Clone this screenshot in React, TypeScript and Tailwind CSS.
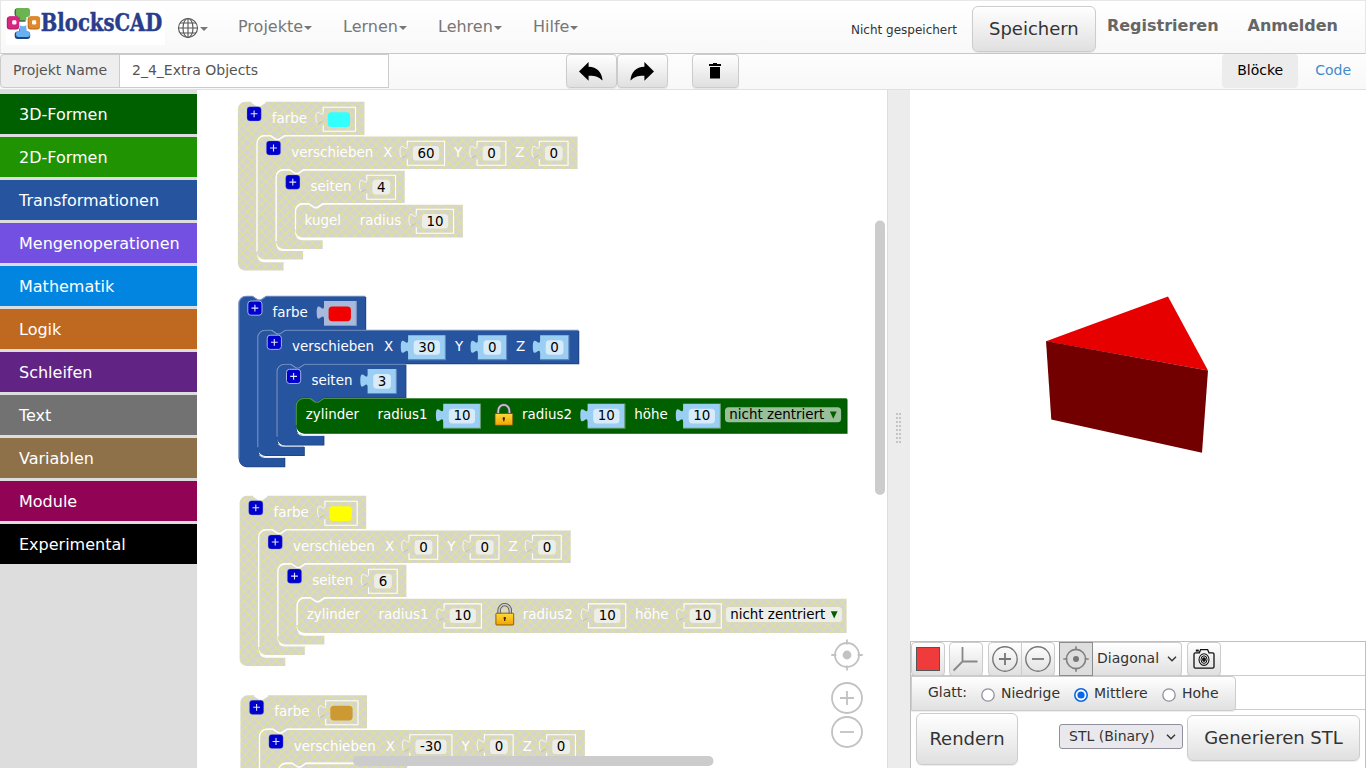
import React from 'react';

const K = 0.9157;
const FS = 13.43;

const ADV: Record<string, number> = {
  farbe: 35.2,
  verschieben: 82,
  seiten: 41,
  X: 9.2,
  Y: 8.2,
  Z: 9.2,
};

const CANVAS_BOTTOM = 768;

/* ---------- block canvas ---------- */

const top = (x: number, y: number) =>
  `M ${x} ${y + 7.3} a 7.3 7.3 0 0 1 7.3 -7.3 h 6.4 l 5.5 3.7 h 2.8 l 5.5 -3.7`;

function Shape({ d, hi, lo, on, color, dark, light, x, y }: {
  d: string; hi: string; lo?: string; on: boolean; color: string; dark: string; light: string; x: number; y: number;
}) {
  return (
    <g transform={`translate(${x} ${y})`}>
      {on && <path d={d} fill={dark} transform="translate(0.9 0.9)" />}
      <path d={d} fill={on ? color : 'url(#off)'} />
      <path d={hi} fill="none" stroke={on ? light : '#fff'} strokeWidth={on ? 1.1 : 1.3} />
      {lo && <path d={lo} fill="none" stroke={on ? '#e3e9f3' : '#fff'} strokeWidth="1.1" />}
    </g>
  );
}

function CBlock({ x, y, w, foot, h1, h2, on, first }: {
  x: number; y: number; w: number; foot: number; h1: number; h2: number; on: boolean; first?: boolean;
}) {
  const c = 19;
  const head = 33.3;
  const d = `${top(0, 0)} H ${w} V ${head} H 46.5 l -5.5 3.7 h -2.8 l -5.5 -3.7 H ${c + 7.3} a 7.3 7.3 0 0 0 -7.3 7.3 V ${h1 - 7.3} a 7.3 7.3 0 0 0 7.3 7.3 H ${foot} V ${h2} H 7.3 a 7.3 7.3 0 0 1 -7.3 -7.3 Z`;
  const hi = first && !on
    ? `M 13.7 .3 l 5.5 3.7 h 2.8 l 5.5 -3.7`
    : `M .2 ${h2 - 8} V 7.5 A 7.3 7.3 0 0 1 7.5 .2 h 6.3 l 5.5 3.7 h 2.8 l 5.5 -3.7 H ${w}`;
  const lo = `M ${c + 1.8} ${h1 - 2.2} a 7.3 7.3 0 0 0 5.5 2.4 H ${foot}`;
  return <Shape d={d} hi={hi} lo={lo} on={on} color="#26549f" dark="#1e437f" light="#7892c2" x={x} y={y} />;
}

function Plus({ x, y, on }: { x: number; y: number; on: boolean }) {
  return (
    <g transform={`translate(${x} ${y})`}>
      <rect width="14.2" height="14.2" rx="3" fill="#0000cc" stroke={on ? '#a6b4e4' : '#8d8ddd'} strokeWidth={on ? 1 : 0.3} />
      <path d="M7.1 3.7 v6.8 M3.7 7.1 h6.8" stroke="#e4e4f4" strokeWidth="1.1" />
    </g>
  );
}

function Label({ x, y, children }: { x: number; y: number; children: string }) {
  return <text x={x} y={y} fill="#fff" fontSize={FS}>{children}</text>;
}

const TAB = `c 0 9.16 -7.3 -7.3 -7.3 6.9 s 7.3 -2.3 7.3 6.9`;

function Socket({ x, y, w, on, fill, edge }: { x: number; y: number; w: number; on: boolean; fill: string; edge: string }) {
  return on ? (
    <g transform={`translate(${x} ${y})`}>
      <path d={`M 0 0 V 4.6 ${TAB} V 24.2 H ${w} V 0 Z`} fill={fill} />
      <path d={`M 0 24.4 H ${w} V 0`} fill="none" stroke={edge} strokeWidth="1.1" />
    </g>
  ) : (
    <g transform={`translate(${x} ${y})`} fill="none" stroke="#fff">
      <path d={`M 0 18.4 V 24.4 H ${w} V .4 H 0 V 4.6`} strokeWidth="1.1" />
      <path d="M 0 4.6 c 0 9.16 -7.3 -7.3 -7.3 6.9 c 0 3 .8 4.6 1.8 5" strokeWidth=".8" />
      <path d="M -5.5 17.2 l 4.8 -2.6" stroke="#b9b9b4" strokeWidth=".8" />
    </g>
  );
}

const numW = (v: string) => (v.startsWith('-') ? 4.85 : 0) + v.replace('-', '').length * 8.54;

function Num({ x, y, v, on, green }: { x: number; y: number; v: string; on: boolean; green?: boolean }) {
  const w = numW(v) + 20.2;
  return (
    <g>
      <Socket x={x} y={y} w={w} on={on} fill="#9aCEf2" edge={green ? '#5f9a6b' : '#6385bd'} />
      <rect x={x + 5.6} y={y + 10 - 5} width={w - 11} height="14.6" rx="3.6" fill={on ? '#d7ebfa' : '#eeeee9'} />
      <text x={x + w / 2 + 0.1} y={y + (green ? 16.2 : 16.7)} textAnchor="middle" fill="#000" fontSize={FS}>{v}</text>
    </g>
  );
}

function Lock({ x, y }: { x: number; y: number }) {
  return (
    <g transform={`translate(${x} ${y})`}>
      <path d="M3.8 10.5 V7.2 a5.6 6 0 0 1 11.2 0 V10.5" fill="none" stroke="#4c4c4c" strokeWidth="3.3" />
      <path d="M3.8 10.5 V7.2 a5.6 6 0 0 1 11.2 0 V10.5" fill="none" stroke="#c9c9c9" strokeWidth="1.7" />
      <rect x=".6" y="9.8" width="17.8" height="11.8" rx=".8" fill="url(#gold)" stroke="#6b4a08" strokeWidth=".8" />
      <path d="M9.4 13.9 v3.6" stroke="#3b2600" strokeWidth="1.3" />
      <circle cx="9.4" cy="14.7" r="1.2" fill="#3b2600" />
    </g>
  );
}

interface StackData {
  x: number; y: number; on?: boolean; color: string; pos: string[]; sides: string; leaf: 'kugel' | 'zylinder';
}

function Stack({ x, y, on = false, color, pos, sides, leaf }: StackData) {
  const x2 = x + 18.9, y2 = y + 33.9;
  const x3 = x + 38.1, y3 = y + 68;
  const x4 = x + 57.4, y4 = y + 102.2;
  const lh = leaf === 'kugel' ? 33.6 : 35;
  const e = leaf === 'kugel' ? 0 : 1.5;
  const o = on ? 0.5 : 0;
  const inView = y3 + 8 < CANVAS_BOTTOM;
  let cx = x2 + 34.5 + ADV.verschieben + 10;
  const fields = pos.map((v, i) => {
    const name = 'XYZ'[i];
    const lx = cx;
    const bx = lx + ADV[name] + 14.8;
    cx = bx + numW(v) + 20.2 + 9.5;
    return { name, lx, bx, v };
  });
  const ty = 21.3;
  const leafW = leaf === 'kugel' ? 167.6 : 846.6 - x4;
  return (
    <g>
      <CBlock first x={x} y={y} w={126.6} foot={45.7} h1={159.6 + e} h2={168.8 + e} on={on} />
      <CBlock x={x2} y={y2} w={cx - x2} foot={46.3} h1={114.6 + e} h2={123.7 + e} on={on} />
      <CBlock x={x3} y={y3} w={128.7} foot={46.7} h1={69.6 + e} h2={79.1 + e} on={on} />
      <Shape x={x4} y={y4} on={on} color="#006000" dark="#004d00" light="#4c904c"
        d={`${top(0, 0)} H ${leafW} V ${lh - o} H 7.3 a 7.3 7.3 0 0 1 -7.3 -7.3 Z`}
        hi={`M .2 ${lh - 8} V 7.5 A 7.3 7.3 0 0 1 7.5 .2 h 6.3 l 5.5 3.7 h 2.8 l 5.5 -3.7 H ${leafW}`} />

      <Plus x={x + 9.1} y={y + 4.9} on={on} />
      <Label x={x + 33.9} y={y + 20.9}>farbe</Label>
      <Socket x={x + 85.3} y={y + 5} w={32.3} on={on} fill="#a8badb" edge="#7f97c6" />
      <rect x={x + 89.9} y={y + 10.4} width="22.3" height="14.7" rx="3.6" fill={color} />

      <Plus x={x2 + 9.6} y={y2 + 5.2} on={on} />
      <Label x={x2 + 34.5} y={y2 + ty}>verschieben</Label>
      {fields.map((f) => (
        <g key={f.name}>
          <Label x={f.lx} y={y2 + ty}>{f.name}</Label>
          <Num x={f.bx} y={y2 + 5.2} v={f.v} on={on} />
        </g>
      ))}

      {inView && (
        <g>
          <Plus x={x3 + 9.7} y={y3 + 5.2} on={on} />
          <Label x={x3 + 34.6} y={y3 + ty}>seiten</Label>
          <Num x={x3 + 90.8} y={y3 + 5} v={sides} on={on} />
        </g>
      )}

      {inView && leaf === 'kugel' && (
        <g>
          <Label x={x4 + 9.3} y={y4 + ty}>kugel</Label>
          <Label x={x4 + 64.4} y={y4 + ty}>radius</Label>
          <Num x={x4 + 121} y={y4 + 4.9} v="10" on={on} />
        </g>
      )}
      {inView && leaf === 'zylinder' && (
        <g>
          <Label x={x4 + 9.7} y={y4 + ty - 0.3}>zylinder</Label>
          <Label x={x4 + 81.4} y={y4 + ty - 0.3}>radius1</Label>
          <Num x={x4 + 147.1} y={y4 + 5.5} v="10" on={on} green />
          <Lock x={x4 + 198.3} y={y4 + 5.4} />
          <Label x={x4 + 225.8} y={y4 + ty - 0.3}>radius2</Label>
          <Num x={x4 + 291.5} y={y4 + 5.5} v="10" on={on} green />
          <Label x={x4 + 338.1} y={y4 + ty - 0.3}>höhe</Label>
          <Num x={x4 + 387} y={y4 + 5.5} v="10" on={on} green />
          <rect x={x4 + 428.9} y={y4 + 9} width="116.1" height="15" rx="3.6" fill={on ? '#99bf99' : '#eeeee9'} />
          <text x={x4 + 433.2} y={y4 + ty - 0.3} fill="#000" fontSize={FS}>nicht zentriert</text>
          <path d={`M ${x4 + 533.8} ${y4 + 13.2} h 6.8 l -3.4 7.2 z`} fill="#006000" />
        </g>
      )}
    </g>
  );
}

const stacks: StackData[] = [
  { x: 237.9, y: 101.8, color: '#33ffff', pos: ['60', '0', '0'], sides: '4', leaf: 'kugel' },
  { x: 238.7, y: 296.1, on: true, color: '#f00000', pos: ['30', '0', '0'], sides: '3', leaf: 'zylinder' },
  { x: 239.6, y: 495.8, color: '#ffff00', pos: ['0', '0', '0'], sides: '6', leaf: 'zylinder' },
  { x: 240.4, y: 695.3, color: '#cc9933', pos: ['-30', '0', '0'], sides: '4', leaf: 'kugel' },
];

function Workspace() {
  return (
    <svg width="690" height="678" viewBox="197 90 690 678" className="block shrink-0 bg-white" fontFamily="'DejaVu Sans', sans-serif">
      <defs>
        <pattern id="off" width={10 * K} height={10 * K} patternUnits="userSpaceOnUse">
          <rect width="10" height="10" fill="#d4d4d4" />
          <path d={`M0 0 L${10 * K} ${10 * K} M${10 * K} 0 L0 ${10 * K}`} stroke="#e5e57f" strokeWidth={K} />
        </pattern>
        <linearGradient id="gold" x1="0" y1="0" x2="0" y2="1">
          <stop offset="0" stopColor="#ffd83a" />
          <stop offset="1" stopColor="#f2a400" />
        </linearGradient>
      </defs>
      {stacks.map((s) => <Stack key={s.y} {...s} />)}
      <g fill="none" stroke="#c2c2c2" strokeWidth="1.8">
        <circle cx="847" cy="655" r="12" />
        <path d="M847 639.5 v5 M847 665.5 v5 M831.3 655 h5 M857.7 655 h5" />
        <circle cx="847" cy="655" r="4.4" fill="#c2c2c2" stroke="none" />
        <circle cx="847" cy="698" r="15" />
        <path d="M840 698 h14 M847 691 v14" />
        <circle cx="847" cy="732" r="15" />
        <path d="M840 732 h14" />
      </g>
      <rect x="875" y="220.5" width="10" height="274.5" rx="5" fill="#ccc" />
      <rect x="353" y="756" width="360.5" height="10" rx="5" fill="#ccc" />
    </svg>
  );
}

/* ---------- toolbar pieces ---------- */

function Logo() {
  return (
    <svg width="159" height="38" viewBox="6 7 159 38" className="ml-[6px] mt-[6px] block shrink-0 bg-white">
      <path d="M14.500 11.5 q0 -3.300 3 -3.300 h9 q3 0 3 3 v2.5 q0 3 -3 3 h-1 v5 h-6.5 v-5 h-1.500 q-3 0 -3 -3z" fill="#3c6e3c" />
      <path d="M16 10.500 q0 -2.500 2.500 -2.500 h9 q2.500 0 2.500 2.500 v3.700 q0 2.500 -2.500 2.500 h-1.100 v3.600 h-6.800 v-3.600 h-1.100 q-2.500 0 -2.500 -2.500z" fill="#6ab552" />
      <path d="M14.700 34.500 q0 -3 3 -3 h1.500 v-3 h7 v3 h1 q3 0 3 3 v1.500 q0 3 -3 3 H17.700 q-3 0 -3 -3z" fill="#1f4480" />
      <path d="M16 33.800 q0 -2.500 2.500 -2.500 h1.200 v-6 q3.300 2 6.600 0 v6 h1.200 q2.500 0 2.500 2.500 v1 q0 2.200 -2.500 2.200 H18.500 q-2.500 0 -2.500 -2.200z" fill="#68b0f0" />
      <rect x="6.800" y="16.600" width="12.400" height="12.800" rx="3" fill="#a81c70" />
      <rect x="7.600" y="16.300" width="11.400" height="12.200" rx="2.800" fill="#d6267f" />
      <rect x="27.700" y="16.600" width="12.300" height="12.800" rx="3" fill="#b8661a" />
      <rect x="28.500" y="16.300" width="11.600" height="12.200" rx="2.800" fill="#e0892c" />
      <rect x="12.200" y="20.300" width="4.200" height="4.200" rx="1.300" fill="#fff" />
      <rect x="32" y="20.300" width="4.200" height="4.200" rx="1.300" fill="#fff" />
      <text x="40.800" y="31" fontFamily="'DejaVu Serif', serif" fontWeight="700" fontSize="23.500" fill="#283d8b" stroke="#283d8b" strokeWidth=".45" textLength="121.500" lengthAdjust="spacingAndGlyphs">BlocksCAD</text>
    </svg>
  );
}

const Caret = () => (
  <svg width="8" height="4" viewBox="0 0 8 4" className="ml-px mt-[2px] block"><path d="M0 0h8L4 4z" fill="#777" /></svg>
);

const Globe = () => (
  <svg width="22" height="22" viewBox="0 0 22 22" className="block" fill="none" stroke="#555" strokeWidth="1.1">
    <circle cx="11" cy="11" r="9.5" />
    <ellipse cx="11" cy="11" rx="5" ry="9.5" />
    <path d="M11 1.5v19M1.5 11h19M3.2 6h15.6M3.2 16h15.6" />
  </svg>
);

const btn = 'flex items-center justify-center border border-[#ccc] rounded-[4px] bg-linear-to-b from-white to-[#e0e0e0] shadow-[0_1px_1px_rgba(0,0,0,0.075)]';

const Reply = ({ flip }: { flip?: boolean }) => (
  <svg width="24" height="19" viewBox="0 0 24 19" className={flip ? 'mr-[2px] block -scale-x-100' : 'mr-px block'}>
    <path d="M0 9.5 L9.6 0 V4.8 C18 5.200 22.800 9.800 23.600 18.600 C19.500 14.600 15.600 13.500 9.600 13.700 V18.800 Z" />
  </svg>
);

const categories = [
  ['3D-Formen', 'bg-[#006000]'],
  ['2D-Formen', 'bg-[#209303]'],
  ['Transformationen', 'bg-[#26549e]'],
  ['Mengenoperationen', 'bg-[#7450e2]'],
  ['Mathematik', 'bg-[#0185e1]'],
  ['Logik', 'bg-[#bf6920]'],
  ['Schleifen', 'bg-[#612485]'],
  ['Text', 'bg-[#727272]'],
  ['Variablen', 'bg-[#8e7149]'],
  ['Module', 'bg-[#900355]'],
  ['Experimental', 'bg-black'],
];

const menus = [
  ['Projekte', 'w-[105px]'],
  ['Lernen', 'w-[95px]'],
  ['Lehren', 'w-[95px]'],
  ['Hilfe', 'w-[60px]'],
];

function Radio({ label, on }: { label: string; on?: boolean }) {
  return (
    <span className="flex items-center">
      <svg width="14" height="14" viewBox="0 0 14 14" className="mr-[6px] mt-[3px] block">
        <circle cx="7" cy="7" r="6.2" fill="#fff" stroke={on ? '#0b66e4' : '#8f8f9d'} strokeWidth={on ? 1.6 : 1.3} />
        {on && <circle cx="7" cy="7" r="3.6" fill="#0b66e4" />}
      </svg>
      {label}
    </span>
  );
}

const Chevron = () => (
  <svg width="10" height="6" viewBox="0 0 10 6" className="block" fill="none" stroke="#333" strokeWidth="1.4"><path d="M1 .8l4 4 4-4" /></svg>
);

function ViewPanel() {
  return (
    <section className="flex min-w-0 flex-1 flex-col bg-white">
      <svg width="456" height="551" viewBox="910 90 456 551" className="block shrink-0">
        <path d="M1168 296.5 L1046 341.2 L1208 370.6 Z" fill="#e60000" />
        <path d="M1046 341 L1208 370.5 L1202 452.8 L1051.3 419.5 Z" fill="#730000" />
      </svg>
      <div className="flex min-h-0 flex-1 flex-col border-x border-t border-[#c0c0c0]">
        <div className="flex h-[34px] shrink-0 border-b border-[#ccc]">
          <div className={`${btn} h-[34px] w-[34px]`}><span className="h-6 w-6 border border-[#555] bg-[#ef3b3b]" /></div>
          <div className={`${btn} ml-1 h-[34px] w-[34px]`}>
            <svg width="26" height="26" viewBox="0 0 26 26" fill="none" stroke="#888" strokeWidth="1.8"><path d="M9.500 1v14.500h15M9.500 15.500L.6 24.500" /></svg>
          </div>
          <div className={`${btn} ml-[5px] h-[34px] w-[34px] rounded-r-none`}>
            <svg width="26" height="26" viewBox="0 0 26 26" fill="none" stroke="#777" strokeWidth="1.4"><circle cx="13" cy="13" r="12.2" /><path d="M13 7v12M7 13h12" strokeWidth="1.8" /></svg>
          </div>
          <div className={`${btn} -ml-px h-[34px] w-[34px] rounded-l-none`}>
            <svg width="26" height="26" viewBox="0 0 26 26" fill="none" stroke="#777" strokeWidth="1.4"><circle cx="13" cy="13" r="12.2" /><path d="M7 13h12" strokeWidth="1.8" /></svg>
          </div>
          <div className="z-10 ml-1 flex h-[34px] w-[34px] items-center justify-center border border-[#8c8c8c] bg-[#dedede]">
            <svg width="26" height="26" viewBox="0 0 26 26" fill="none" stroke="#808080" strokeWidth="1.6"><circle cx="13" cy="13" r="9.6" /><circle cx="13" cy="13" r="3" fill="#777" stroke="none" /><path d="M13 .3v4M13 21.7v4M.3 13h4M21.7 13h4" /></svg>
          </div>
          <div className={`${btn} -ml-px h-[34px] w-[90px] justify-between! rounded-l-none border-l-0 pl-[5px] pr-1 text-[14px] text-[#333]`}>
            <span className="-mt-px">Diagonal</span><Chevron />
          </div>
          <div className={`${btn} ml-[5px] h-[34px] w-[34px]`}>
            <svg width="22" height="22" viewBox="0 0 22 22" fill="none" stroke="#111" strokeWidth="1.3" className="-ml-px">
              <path d="M1 6.2q0-1.4 1.4-1.4h4L7.6 1.6h7l1.4 3.2h3.6q1.4 0 1.4 1.4v12.6q0 1.4-1.4 1.4H2.400q-1.400 0-1.400-1.400z" />
              <ellipse cx="11" cy="11.600" rx="5" ry="5.800" strokeWidth="1.1" />
              <ellipse cx="11" cy="11.600" rx="3" ry="3.800" strokeWidth="1" />
              <ellipse cx="11" cy="11.600" rx="1.300" ry="1.800" fill="#111" />
              <path d="M2.800 2.600h3" strokeWidth="2" />
            </svg>
          </div>
        </div>
        <div className="flex h-[34px] shrink-0 border-b border-[#ccc]">
          <div className={`${btn} h-[35px] w-[325px] justify-start! rounded-l-none pb-px pl-[16px] text-[14px] text-[#333]`}>
            <span className="-mt-[2px] w-[53px]">Glatt:</span>
            <span className="w-[93px]"><Radio label="Niedrige" /></span>
            <span className="w-[88px]"><Radio label="Mittlere" on /></span>
            <Radio label="Hohe" />
          </div>
        </div>
        <div className="flex items-start pl-[5px] pt-[3px] text-[18px] text-[#333]">
          <div className={`${btn} h-[52px] w-[102px] rounded-[6px] pb-0.5`}>Rendern</div>
          <div className="ml-[41px] mt-[11px] flex h-[25px] w-[124px] items-center justify-between rounded-[3px] border border-[#8f8f9d] bg-[#e9e9ed] pl-[9px] pr-[6px] text-[14px]">
            <span>STL (Binary)</span><Chevron />
          </div>
          <div className={`${btn} ml-1 mt-[2px] h-[46px] w-[173px] rounded-[6px] pb-0.5`}>Generieren STL</div>
        </div>
      </div>
    </section>
  );
}

export default function App() {
  return (
    <div className="flex h-[768px] w-[1366px] flex-col overflow-hidden bg-white font-['DejaVu_Sans',sans-serif] leading-normal">
      <header className="flex h-[54px] shrink-0 border border-[#e7e7e7] border-b-[#c8c8c8] bg-linear-to-b from-white to-[#f8f8f8] text-[16px] text-[#777]">
        <div className="-ml-px flex"><Logo /></div>
        <div className="ml-[12px] mt-[16px] flex h-[22px] w-[61px] items-center"><Globe /><Caret /></div>
        {menus.map(([m, w]) => (
          <div key={m} className={`${w} mt-[14px] flex h-6 items-center`}><span>{m}</span><Caret /></div>
        ))}
        <div className="ml-auto mt-[20px] text-[12px] text-[#333]">Nicht gespeichert</div>
        <div className={`${btn} ml-[15px] mt-[5px] h-[46px] w-[124px] rounded-[6px] pb-0.5 text-[18px] text-[#333]`}>Speichern</div>
        <div className="ml-[11px] mt-[13px] font-bold text-[#666]">Registrieren</div>
        <div className="ml-[29px] mr-[27px] mt-[13px] font-bold text-[#666]">Anmelden</div>
      </header>

      <div className="flex h-[36px] shrink-0 border-b border-[#e0e0e0] bg-linear-to-b from-[#fdfdfd] to-[#f8f8f8] text-[14px]">
        <div className="flex h-[34px] w-[120px] items-center rounded-l-[4px] border border-[#ccc] bg-[#eee] pb-px pl-3 text-[#555]">Projekt Name</div>
        <div className="-ml-px flex h-[34px] w-[270px] items-center border border-[#ccc] bg-white pb-px pl-3 text-[#555]">2_4_Extra Objects</div>
        <div className={`${btn} ml-[177px] h-[34px] w-[51px]`}><Reply /></div>
        <div className={`${btn} h-[34px] w-[51px]`}><Reply flip /></div>
        <div className={`${btn} ml-[24px] h-[34px] w-[47px]`}>
          <svg width="12" height="16" viewBox="0 0 12 16" className="mr-[2px] block"><path d="M4 0h4v1h4v2H0V1h4zM1 4h10v11.500H1z" /></svg>
        </div>
        <div className="ml-auto mr-[68px] flex gap-[17px]">
          <div className="flex h-[34px] w-[76px] items-center justify-center rounded-[4px] bg-[#ececec] pb-px text-black">Blöcke</div>
          <div className="-mr-[53px] flex h-[34px] items-center pb-px text-[#428bca]">Code</div>
        </div>
      </div>

      <main className="flex min-h-0 flex-1">
        <nav className="flex w-[197px] shrink-0 flex-col gap-[3px] bg-[#ddd] pt-[4px]">
          {categories.map(([name, bg]) => (
            <div key={name} className={`${bg} flex h-10 shrink-0 items-center pl-[19px] pt-[2px] text-[16px] text-white`}>{name}</div>
          ))}
        </nav>
        <Workspace />
        <div className="flex w-[23px] shrink-0 items-center justify-center border-l border-[#ddd] bg-[#ececec]">
          <svg width="6" height="32" viewBox="0 0 6 32">
            {[0, 1, 2, 3, 4, 5, 6, 7].map((r) => (
              <path key={r} d={`M0 ${r * 4 + 1} h2 M3 ${r * 4 + 1} h2`} stroke="#c4c4c4" strokeWidth="2" />
            ))}
          </svg>
        </div>
        <ViewPanel />
      </main>
    </div>
  );
}
